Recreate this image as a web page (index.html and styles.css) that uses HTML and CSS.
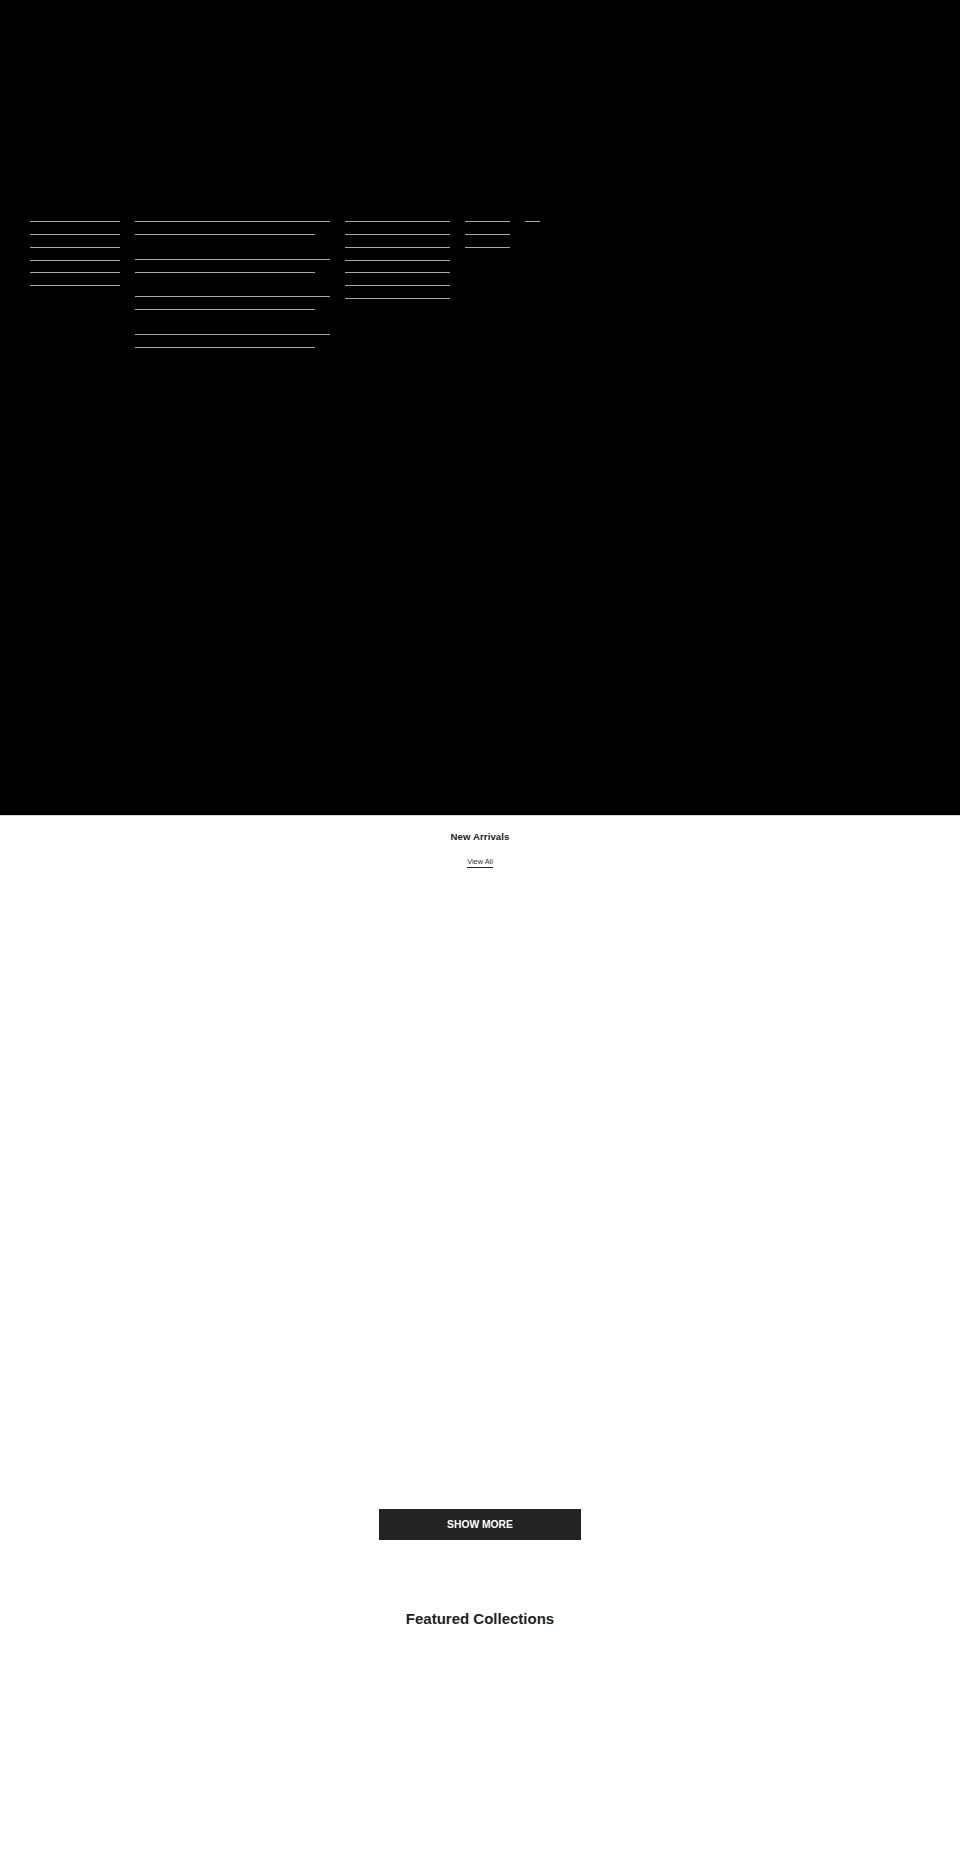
FILE: index.html
```html
<!DOCTYPE html>
<html lang="en">
<head>
<meta charset="utf-8">
<title>Store</title>
<link rel="stylesheet" href="styles.css">
</head>
<body>
<header class="hero">
  <nav class="menu">
    <ul class="col col-1">
      <li class="item"><a class="row" href="#"></a></li>
      <li class="item"><a class="row" href="#"></a></li>
      <li class="item"><a class="row" href="#"></a></li>
      <li class="item"><a class="row" href="#"></a></li>
      <li class="item"><a class="row" href="#"></a></li>
      <li class="item"><a class="row" href="#"></a></li>
    </ul>
    <ul class="col col-2">
      <li class="item pair"><a class="row wide" href="#"></a><a class="row" href="#"></a></li>
      <li class="item pair"><a class="row wide" href="#"></a><a class="row" href="#"></a></li>
      <li class="item pair"><a class="row wide" href="#"></a><a class="row" href="#"></a></li>
      <li class="item pair"><a class="row wide" href="#"></a><a class="row" href="#"></a></li>
    </ul>
    <ul class="col col-3">
      <li class="item"><a class="row" href="#"></a></li>
      <li class="item"><a class="row" href="#"></a></li>
      <li class="item"><a class="row" href="#"></a></li>
      <li class="item"><a class="row" href="#"></a></li>
      <li class="item"><a class="row" href="#"></a></li>
      <li class="item"><a class="row" href="#"></a></li>
      <li class="item"><a class="row" href="#"></a></li>
    </ul>
    <ul class="col col-4">
      <li class="item"><a class="row" href="#"></a></li>
      <li class="item"><a class="row" href="#"></a></li>
      <li class="item"><a class="row" href="#"></a></li>
    </ul>
    <ul class="col col-5">
      <li class="item"><a class="row" href="#"></a></li>
    </ul>
  </nav>
</header>

<main>
  <section class="arrivals">
    <h2 class="arrivals-title">New Arrivals</h2>
    <a class="view-all" href="#">View All</a>
    <div class="products"></div>
    <a class="show-more" href="#">SHOW MORE</a>
  </section>

  <section class="featured">
    <h2 class="featured-title">Featured Collections</h2>
  </section>
</main>
</body>
</html>
```

FILE: styles.css
```css
* {
  box-sizing: border-box;
}

html, body {
  margin: 0;
  padding: 0;
  background: #fff;
  font-family: "Liberation Sans", Arial, Helvetica, sans-serif;
  color: #222;
}

.hero {
  height: 816px;
  background: #000;
  border-bottom: 1px solid #d6d6d6;
  padding: 209.5px 0 0 30px;
}

.menu {
  display: flex;
  gap: 15px;
  align-items: flex-start;
}

.col {
  list-style: none;
  margin: 0;
  padding: 0;
}

.col-1 { width: 90px; }
.col-2 { width: 195px; }
.col-3 { width: 105px; }
.col-4 { width: 45px; }
.col-5 { width: 15px; }

.item {
  margin: 0;
  padding: 0;
}

.row {
  display: block;
  height: 12.75px;
  border-bottom: 1px solid #a8a8a8;
  text-decoration: none;
}

.pair {
  margin-bottom: 12px;
}

.pair .row {
  width: 180px;
}

.pair .row.wide {
  width: 195px;
}

.arrivals {
  display: flex;
  flex-direction: column;
  align-items: center;
  padding-top: 15px;
}

.arrivals-title {
  margin: 0;
  font-size: 9.6px;
  line-height: 12px;
  font-weight: 700;
  letter-spacing: 0.1px;
  color: #222;
}

.view-all {
  display: block;
  margin-top: 14px;
  font-size: 7.4px;
  line-height: 10px;
  color: #333;
  text-decoration: none;
  border-bottom: 1px solid #222;
}

.products {
  width: 100%;
  height: 641px;
}

.show-more {
  display: flex;
  align-items: center;
  justify-content: center;
  width: 202px;
  height: 31px;
  background: #232323;
  color: #fff;
  font-size: 10.3px;
  font-weight: 700;
  text-decoration: none;
}

.featured {
  padding-top: 69.5px;
  height: 335px;
}

.featured-title {
  margin: 0;
  text-align: center;
  font-size: 15px;
  line-height: 18px;
  font-weight: 700;
  color: #222;
}
```
